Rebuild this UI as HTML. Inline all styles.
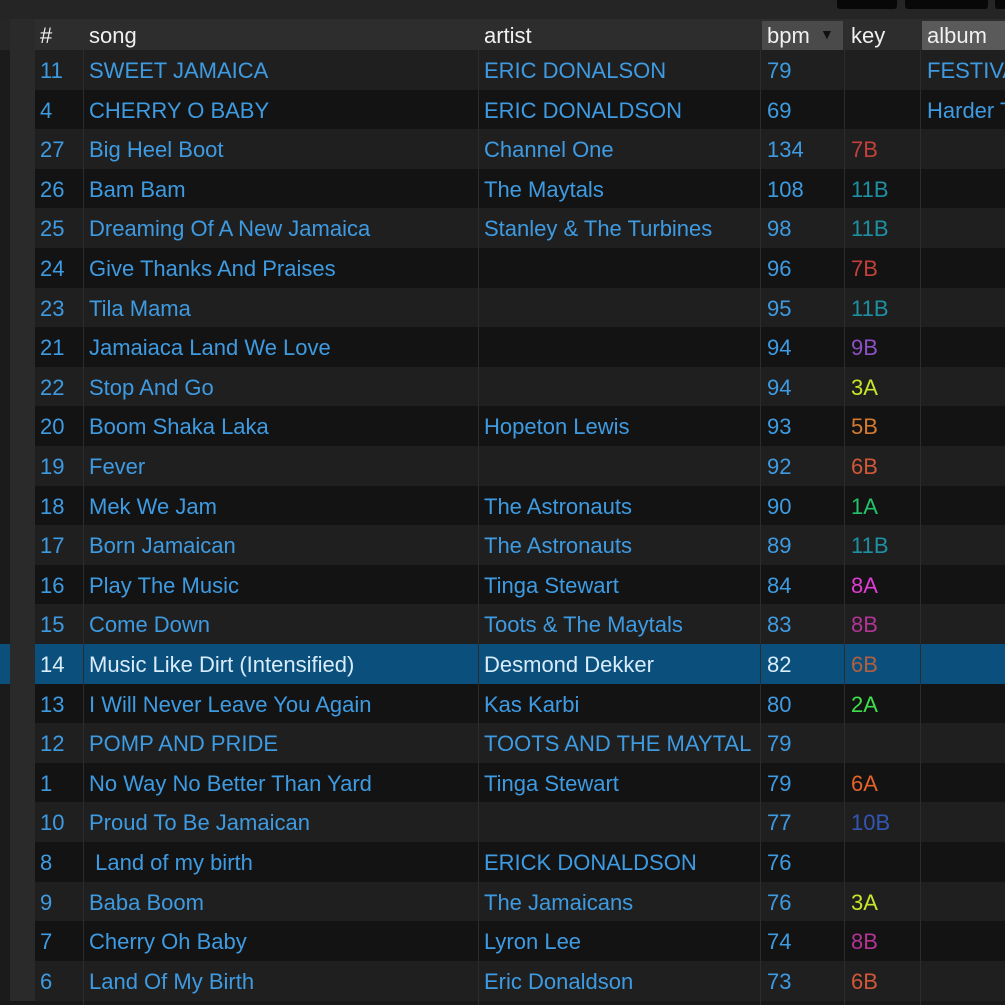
<!DOCTYPE html>
<html><head><style>
body{margin:0;width:1005px;height:1005px;overflow:hidden;background:#181818;font-family:"Liberation Sans",Arial,sans-serif;}
.top{position:absolute;left:0;top:0;width:1005px;height:19px;background:#252525;}
.btn{position:absolute;top:0;height:9px;background:#080808;border-radius:0 0 3px 3px;}
.hdr{position:absolute;left:0;top:19px;width:1005px;height:31px;background:#2d2d2d;color:#f0f0f0;font-size:22px;}
.hdr span,.r span{position:absolute;white-space:nowrap;}
.r{position:absolute;left:0;width:1005px;height:40px;font-size:22px;color:#3e9be2;line-height:41px;}
.a{background:#1f1f1f}.b{background:#131313}
.sel{background:#0b4f7d;color:#d8ecfa}
.strip{position:absolute;left:0;top:0;width:10px;height:100%;background:#1b1b1b}
.c2{position:absolute;left:10px;top:0;width:25px;height:100%;background:#2a2a2a}
.sel .strip{background:#0b4f7d}
.vl{position:absolute;top:19px;width:1px;height:986px;background:#2c2c2c;z-index:5}
</style></head><body>
<div class="top"></div>
<div class="btn" style="left:837px;width:60px"></div>
<div class="btn" style="left:905px;width:83px"></div>
<div class="btn" style="left:995px;width:12px"></div>
<div class="hdr">
<div style="position:absolute;left:0;top:0;width:10px;height:31px;background:#262626"></div>
<div style="position:absolute;left:10px;top:0;width:25px;height:31px;background:#2a2a2a"></div>
<div style="position:absolute;left:762px;top:2px;width:81px;height:29px;background:#4a4a4a"></div>
<div style="position:absolute;left:922px;top:2px;width:83px;height:29px;background:#5a5a5a"></div>
<span style="left:40px;top:4px">#</span><span style="left:89px;top:4px">song</span><span style="left:484px;top:4px">artist</span><span style="left:767px;top:4px">bpm</span><span style="left:820px;top:7px;font-size:14px;color:#111">▼</span><span style="left:851px;top:4px">key</span><span style="left:927px;top:4px">album</span>
</div>
<div class="vl" style="left:83px"></div><div class="vl" style="left:478px"></div><div class="vl" style="left:760px"></div><div class="vl" style="left:844px"></div><div class="vl" style="left:920px"></div>

<div class="r a" style="top:50px"><div class="strip"></div><div class="c2"></div><span style="left:40px">11</span><span style="left:89px">SWEET JAMAICA</span><span style="left:484px">ERIC DONALSON</span><span style="left:767px">79</span><span style="left:927px">FESTIVAL</span></div>
<div class="r b" style="top:90px"><div class="strip"></div><div class="c2"></div><span style="left:40px">4</span><span style="left:89px">CHERRY O BABY</span><span style="left:484px">ERIC DONALDSON</span><span style="left:767px">69</span><span style="left:927px">Harder T</span></div>
<div class="r a" style="top:129px"><div class="strip"></div><div class="c2"></div><span style="left:40px">27</span><span style="left:89px">Big Heel Boot</span><span style="left:484px">Channel One</span><span style="left:767px">134</span><span style="left:851px;color:#c2403a">7B</span></div>
<div class="r b" style="top:169px"><div class="strip"></div><div class="c2"></div><span style="left:40px">26</span><span style="left:89px">Bam Bam</span><span style="left:484px">The Maytals</span><span style="left:767px">108</span><span style="left:851px;color:#1d90a3">11B</span></div>
<div class="r a" style="top:208px"><div class="strip"></div><div class="c2"></div><span style="left:40px">25</span><span style="left:89px">Dreaming Of A New Jamaica</span><span style="left:484px">Stanley &amp; The Turbines</span><span style="left:767px">98</span><span style="left:851px;color:#1d90a3">11B</span></div>
<div class="r b" style="top:248px"><div class="strip"></div><div class="c2"></div><span style="left:40px">24</span><span style="left:89px">Give Thanks And Praises</span><span style="left:767px">96</span><span style="left:851px;color:#c2403a">7B</span></div>
<div class="r a" style="top:288px"><div class="strip"></div><div class="c2"></div><span style="left:40px">23</span><span style="left:89px">Tila Mama</span><span style="left:767px">95</span><span style="left:851px;color:#1d90a3">11B</span></div>
<div class="r b" style="top:327px"><div class="strip"></div><div class="c2"></div><span style="left:40px">21</span><span style="left:89px">Jamaiaca Land We Love</span><span style="left:767px">94</span><span style="left:851px;color:#8c50c4">9B</span></div>
<div class="r a" style="top:367px"><div class="strip"></div><div class="c2"></div><span style="left:40px">22</span><span style="left:89px">Stop And Go</span><span style="left:767px">94</span><span style="left:851px;color:#c6e62a">3A</span></div>
<div class="r b" style="top:406px"><div class="strip"></div><div class="c2"></div><span style="left:40px">20</span><span style="left:89px">Boom Shaka Laka</span><span style="left:484px">Hopeton Lewis</span><span style="left:767px">93</span><span style="left:851px;color:#d37a30">5B</span></div>
<div class="r a" style="top:446px"><div class="strip"></div><div class="c2"></div><span style="left:40px">19</span><span style="left:89px">Fever</span><span style="left:767px">92</span><span style="left:851px;color:#d05838">6B</span></div>
<div class="r b" style="top:486px"><div class="strip"></div><div class="c2"></div><span style="left:40px">18</span><span style="left:89px">Mek We Jam</span><span style="left:484px">The Astronauts</span><span style="left:767px">90</span><span style="left:851px;color:#22c46a">1A</span></div>
<div class="r a" style="top:525px"><div class="strip"></div><div class="c2"></div><span style="left:40px">17</span><span style="left:89px">Born Jamaican</span><span style="left:484px">The Astronauts</span><span style="left:767px">89</span><span style="left:851px;color:#1d90a3">11B</span></div>
<div class="r b" style="top:565px"><div class="strip"></div><div class="c2"></div><span style="left:40px">16</span><span style="left:89px">Play The Music</span><span style="left:484px">Tinga Stewart</span><span style="left:767px">84</span><span style="left:851px;color:#e23ad4">8A</span></div>
<div class="r a" style="top:604px"><div class="strip"></div><div class="c2"></div><span style="left:40px">15</span><span style="left:89px">Come Down</span><span style="left:484px">Toots &amp; The Maytals</span><span style="left:767px">83</span><span style="left:851px;color:#b23494">8B</span></div>
<div class="r sel" style="top:644px"><div class="strip"></div><div class="c2"></div><span style="left:40px">14</span><span style="left:89px">Music Like Dirt (Intensified)</span><span style="left:484px">Desmond Dekker</span><span style="left:767px">82</span><span style="left:851px;color:#b06040">6B</span></div>
<div class="r b" style="top:684px"><div class="strip"></div><div class="c2"></div><span style="left:40px">13</span><span style="left:89px">I Will Never Leave You Again</span><span style="left:484px">Kas Karbi</span><span style="left:767px">80</span><span style="left:851px;color:#3ee04a">2A</span></div>
<div class="r a" style="top:723px"><div class="strip"></div><div class="c2"></div><span style="left:40px">12</span><span style="left:89px">POMP AND PRIDE</span><span style="left:484px">TOOTS AND THE MAYTAL</span><span style="left:767px">79</span></div>
<div class="r b" style="top:763px"><div class="strip"></div><div class="c2"></div><span style="left:40px">1</span><span style="left:89px">No Way No Better Than Yard</span><span style="left:484px">Tinga Stewart</span><span style="left:767px">79</span><span style="left:851px;color:#e4622a">6A</span></div>
<div class="r a" style="top:802px"><div class="strip"></div><div class="c2"></div><span style="left:40px">10</span><span style="left:89px">Proud To Be Jamaican</span><span style="left:767px">77</span><span style="left:851px;color:#3456b4">10B</span></div>
<div class="r b" style="top:842px"><div class="strip"></div><div class="c2"></div><span style="left:40px">8</span><span style="left:89px">&nbsp;Land of my birth</span><span style="left:484px">ERICK DONALDSON</span><span style="left:767px">76</span></div>
<div class="r a" style="top:882px"><div class="strip"></div><div class="c2"></div><span style="left:40px">9</span><span style="left:89px">Baba Boom</span><span style="left:484px">The Jamaicans</span><span style="left:767px">76</span><span style="left:851px;color:#c6e62a">3A</span></div>
<div class="r b" style="top:921px"><div class="strip"></div><div class="c2"></div><span style="left:40px">7</span><span style="left:89px">Cherry Oh Baby</span><span style="left:484px">Lyron Lee</span><span style="left:767px">74</span><span style="left:851px;color:#b23494">8B</span></div>
<div class="r a" style="top:961px"><div class="strip"></div><div class="c2"></div><span style="left:40px">6</span><span style="left:89px">Land Of My Birth</span><span style="left:484px">Eric Donaldson</span><span style="left:767px">73</span><span style="left:851px;color:#d05838">6B</span></div>
</body></html>
